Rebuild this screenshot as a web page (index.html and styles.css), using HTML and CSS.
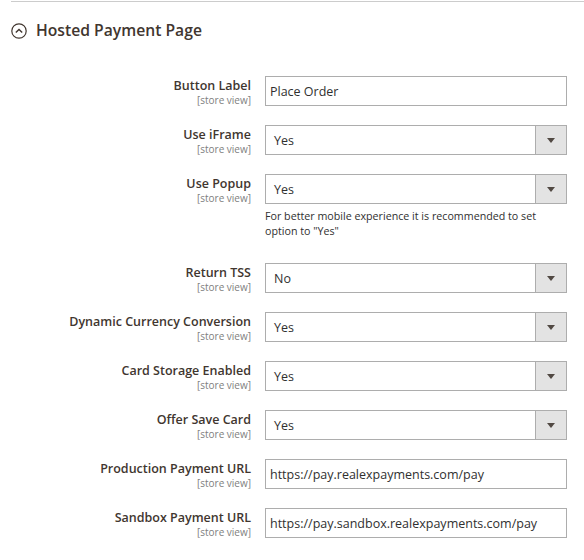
FILE: index.html
```html
<!DOCTYPE html>
<html>
<head>
<meta charset="utf-8">
<link rel="stylesheet" href="styles.css">
</head>
<body>
<div class="page">
  <div class="section-head">
    <svg class="toggle" width="16" height="16" viewBox="0 0 16 16">
      <circle cx="8" cy="8" r="7.2" fill="none" stroke="#41362f" stroke-width="1.2"/>
      <path d="M4.8 9.6 L8 6.4 L11.2 9.6" fill="none" stroke="#41362f" stroke-width="1.4"/>
    </svg>
    <span class="title">Hosted Payment Page</span>
  </div>
  <div class="form">
    <div class="row">
      <div class="label"><span class="name">Button Label</span><span class="scope">[store view]</span></div>
      <div class="control"><div class="input">Place Order</div></div>
    </div>
    <div class="row">
      <div class="label"><span class="name">Use iFrame</span><span class="scope">[store view]</span></div>
      <div class="control"><div class="select"><span class="val">Yes</span><span class="arrow"></span></div></div>
    </div>
    <div class="row note-row">
      <div class="label"><span class="name">Use Popup</span><span class="scope">[store view]</span></div>
      <div class="control"><div class="select"><span class="val">Yes</span><span class="arrow"></span></div>
        <p class="note">For better mobile experience it is recommended to set option to "Yes"</p></div>
    </div>
    <div class="row">
      <div class="label"><span class="name">Return TSS</span><span class="scope">[store view]</span></div>
      <div class="control"><div class="select"><span class="val">No</span><span class="arrow"></span></div></div>
    </div>
    <div class="row">
      <div class="label"><span class="name">Dynamic Currency Conversion</span><span class="scope">[store view]</span></div>
      <div class="control"><div class="select"><span class="val">Yes</span><span class="arrow"></span></div></div>
    </div>
    <div class="row">
      <div class="label"><span class="name">Card Storage Enabled</span><span class="scope">[store view]</span></div>
      <div class="control"><div class="select"><span class="val">Yes</span><span class="arrow"></span></div></div>
    </div>
    <div class="row">
      <div class="label"><span class="name">Offer Save Card</span><span class="scope">[store view]</span></div>
      <div class="control"><div class="select"><span class="val">Yes</span><span class="arrow"></span></div></div>
    </div>
    <div class="row">
      <div class="label"><span class="name">Production Payment URL</span><span class="scope">[store view]</span></div>
      <div class="control"><div class="input">https://pay.realexpayments.com/pay</div></div>
    </div>
    <div class="row">
      <div class="label"><span class="name">Sandbox Payment URL</span><span class="scope">[store view]</span></div>
      <div class="control"><div class="input">https://pay.sandbox.realexpayments.com/pay</div></div>
    </div>
  </div>
</div>
</body>
</html>
```
FILE: styles.css
```css
html, body {
  margin: 0;
  padding: 0;
  background: #fff;
}
body {
  font-family: "Open Sans", "Noto Sans", sans-serif;
  color: #41362f;
}
.page {
  margin-left: 11px;
  padding-top: 1px;
}
.section-head {
  border-top: 1px solid #cccccc;
  display: flex;
  align-items: center;
  height: 56px;
  padding-bottom: 18px;
  box-sizing: content-box;
}
.toggle {
  margin-right: 9px;
  margin-top: 1px;
}
.title {
  font-size: 15.7px;
  font-weight: 600;
  color: #41362f;
}
.form {
  display: flex;
  flex-direction: column;
}
.row {
  display: flex;
  align-items: flex-start;
  margin-bottom: 19px;
}
.note-row {
  margin-bottom: 24px;
}
.label {
  width: 240px;
  display: flex;
  flex-direction: column;
  align-items: flex-end;
  padding-top: 1px;
  margin-right: 14px;
}
.name {
  font-size: 12.5px;
  font-weight: 600;
  line-height: 17px;
  color: #41362f;
}
.scope {
  font-size: 10px;
  line-height: 12px;
  color: #808080;
}
.control {
  width: 302px;
}
.input, .select {
  box-sizing: border-box;
  height: 30px;
  border: 1px solid #adadad;
  background: #fff;
  font-size: 12.5px;
  color: #303030;
  display: flex;
  align-items: center;
}
.input {
  padding-left: 4px;
}
.val {
  flex: 1;
  padding-left: 8px;
}
.arrow {
  width: 30px;
  height: 28px;
  border-left: 1px solid #adadad;
  background: #e3e3e3;
  position: relative;
}
.arrow::after {
  content: "";
  position: absolute;
  left: 11px;
  top: 12px;
  border-left: 4px solid transparent;
  border-right: 4px solid transparent;
  border-top: 5px solid #514943;
}
.note {
  margin: 5px 0 0 0;
  font-size: 10.7px;
  line-height: 15px;
  color: #303030;
}
```
